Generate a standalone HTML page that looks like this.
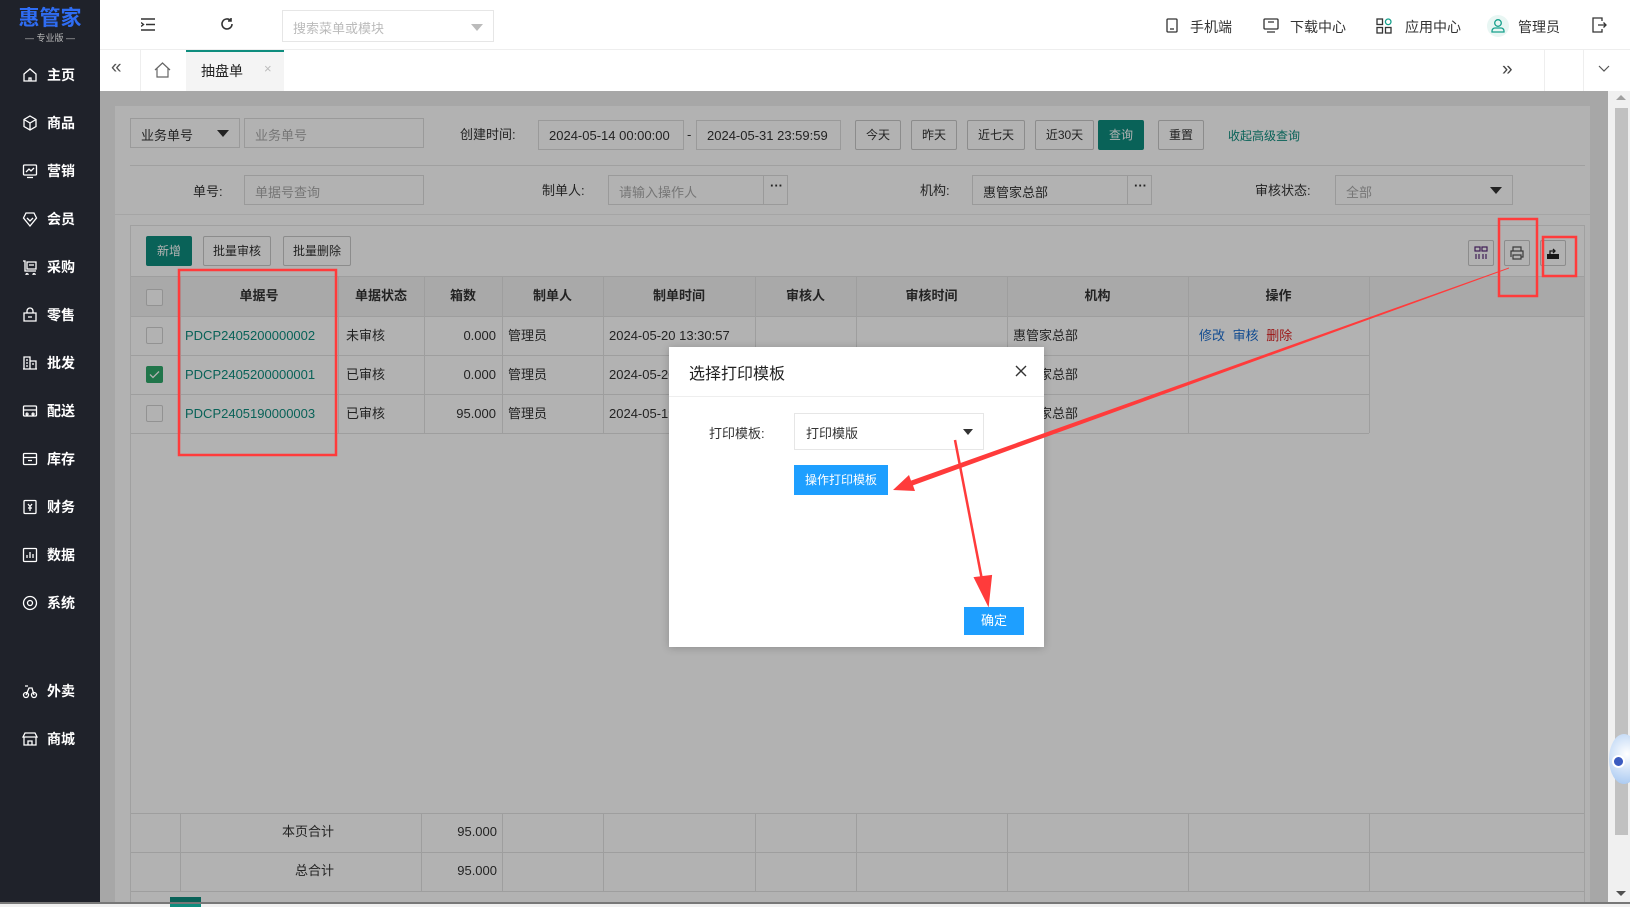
<!DOCTYPE html>
<html><head><meta charset="utf-8"><style>
*{box-sizing:border-box;margin:0;padding:0}
body{width:1630px;height:904px;position:relative;overflow:hidden;background:#f0f0f0;font-family:"Liberation Sans","Noto Sans CJK SC",sans-serif;font-size:13px;color:#333}
.abs{position:absolute}
#side{left:0;top:0;width:100px;height:904px;background:#1f222a}
.logo{left:0;top:0;width:100px;height:50px;text-align:center;color:#2f6df3;font-weight:bold;font-size:21px;line-height:26px;padding-top:6px}
.logo small{display:block;font-size:9px;color:#bbb;line-height:12px;font-weight:normal}
.mi{left:22px;color:#fff;font-size:14px;font-weight:bold;height:20px;line-height:20px}
.mi svg{position:absolute;left:0;top:2px}
.mi span{position:absolute;left:25px;white-space:nowrap}
#top{left:100px;top:0;width:1530px;height:50px;background:#fff;border-bottom:1px solid #eee}
#tabs{left:100px;top:50px;width:1530px;height:41px;background:#fff}
.box{position:absolute;border:1px solid #ddd;background:#fff}
.btn{position:absolute;border:1px solid #c9c9c9;background:#fff;text-align:center;font-size:12px;color:#333;border-radius:2px}
.teal{background:#0e8d7e;border-color:#0e8d7e;color:#fff}
.lbl{position:absolute;font-size:13px;color:#333;white-space:nowrap}
.ph{color:#aaa}
.cell{position:absolute;font-size:13px;white-space:nowrap;height:20px;line-height:20px}
.vl{position:absolute;width:1px;background:#e2e2e2}
.hl{position:absolute;height:1px;background:#e2e2e2}
.cb{position:absolute;width:17px;height:17px;border:1px solid #d2d2d2;background:#fff;border-radius:2px}
</style></head><body>

<div id="side" class="abs">
 <div class="logo abs">惠管家<small>— 专业版 —</small></div>
 <div class="mi abs" style="top:65px"><svg width="16" height="16" viewBox="0 0 16 16" fill="none" stroke="#fff" stroke-width="1.3"><path d="M2 7L8 2l6 5v7H2z M7 14v-3h2v3"/></svg><span>主页</span></div>
 <div class="mi abs" style="top:113px"><svg width="16" height="16" viewBox="0 0 16 16" fill="none" stroke="#fff" stroke-width="1.3"><path d="M8 1l6 3.5v7L8 15l-6-3.5v-7z M2 4.5L8 8l6-3.5 M8 8v7"/></svg><span>商品</span></div>
 <div class="mi abs" style="top:161px"><svg width="16" height="16" viewBox="0 0 16 16" fill="none" stroke="#fff" stroke-width="1.3"><rect x="1.5" y="2" width="13" height="10" rx="1"/><path d="M4 9l3-3 2 2 3-3 M5 14.5h6"/></svg><span>营销</span></div>
 <div class="mi abs" style="top:209px"><svg width="16" height="16" viewBox="0 0 16 16" fill="none" stroke="#fff" stroke-width="1.3"><path d="M8 15L1.5 7 4 2h8l2.5 5z M5 7l3 3 3-3"/></svg><span>会员</span></div>
 <div class="mi abs" style="top:257px"><svg width="16" height="16" viewBox="0 0 16 16" fill="none" stroke="#fff" stroke-width="1.3"><path d="M1 2h2v10h11 M5 3h9v7H5z M7 6h5 M5 14.5a1 1 0 1 0 .1 0 M12 14.5a1 1 0 1 0 .1 0"/></svg><span>采购</span></div>
 <div class="mi abs" style="top:305px"><svg width="16" height="16" viewBox="0 0 16 16" fill="none" stroke="#fff" stroke-width="1.3"><path d="M2 6h12v8H2z M5 6V4a3 3 0 0 1 6 0v2 M6 10h4"/></svg><span>零售</span></div>
 <div class="mi abs" style="top:353px"><svg width="16" height="16" viewBox="0 0 16 16" fill="none" stroke="#fff" stroke-width="1.3"><path d="M2 14V2h6v12 M8 6h6v8 M1 14h14 M4 5h2 M4 8h2 M4 11h2 M10 9h2"/></svg><span>批发</span></div>
 <div class="mi abs" style="top:401px"><svg width="16" height="16" viewBox="0 0 16 16" fill="none" stroke="#fff" stroke-width="1.3"><rect x="1.5" y="3" width="13" height="10" rx="1"/><path d="M1.5 7h13 M5 10a1 1 0 1 0 .1 0 M11 10a1 1 0 1 0 .1 0"/></svg><span>配送</span></div>
 <div class="mi abs" style="top:449px"><svg width="16" height="16" viewBox="0 0 16 16" fill="none" stroke="#fff" stroke-width="1.3"><rect x="1.5" y="2.5" width="13" height="11" rx="1"/><path d="M1.5 6.5h13 M6 9.5h4"/></svg><span>库存</span></div>
 <div class="mi abs" style="top:497px"><svg width="16" height="16" viewBox="0 0 16 16" fill="none" stroke="#fff" stroke-width="1.3"><rect x="2" y="1.5" width="12" height="13" rx="1"/><path d="M6 5l2 2.5L10 5 M8 7.5V12 M6 9h4"/></svg><span>财务</span></div>
 <div class="mi abs" style="top:545px"><svg width="16" height="16" viewBox="0 0 16 16" fill="none" stroke="#fff" stroke-width="1.3"><rect x="1.5" y="1.5" width="13" height="13" rx="1"/><path d="M5 11V8 M8 11V5 M11 11V7"/></svg><span>数据</span></div>
 <div class="mi abs" style="top:593px"><svg width="16" height="16" viewBox="0 0 16 16" fill="none" stroke="#fff" stroke-width="1.3"><circle cx="8" cy="8" r="6.5"/><circle cx="8" cy="8" r="2.5"/></svg><span>系统</span></div>
 <div class="mi abs" style="top:681px"><svg width="16" height="16" viewBox="0 0 16 16" fill="none" stroke="#fff" stroke-width="1.3"><circle cx="4" cy="12" r="2.5"/><circle cx="12" cy="12" r="2.5"/><path d="M4 12l3-7h3l2 7 M3 3h3"/></svg><span>外卖</span></div>
 <div class="mi abs" style="top:729px"><svg width="16" height="16" viewBox="0 0 16 16" fill="none" stroke="#fff" stroke-width="1.3"><path d="M2 6V14h12V6 M1 6l2-4h10l2 4z M6 14v-4h4v4"/></svg><span>商城</span></div>
</div>

<div id="top" class="abs">
 <svg class="abs" style="left:41px;top:18px" width="14" height="13" viewBox="0 0 14 13" fill="none" stroke="#333" stroke-width="1.4"><path d="M0 1h14 M5 6.5h9 M0 12h14 M0 4.5l2.5 2-2.5 2"/></svg>
 <svg class="abs" style="left:120px;top:17px" width="14" height="14" viewBox="0 0 14 14" fill="none" stroke="#333" stroke-width="1.6"><path d="M12 7a5 5 0 1 1-1.5-3.6 M11 1v3h-3"/></svg>
 <div class="box" style="left:182px;top:10px;width:212px;height:32px;border-color:#e6e6e6"><span class="ph abs" style="left:10px;top:7px;font-size:13px;color:#bbb">搜索菜单或模块</span><span class="abs" style="right:10px;top:13px;border:6px solid transparent;border-top:7px solid #bbb;border-bottom:0"></span></div>
 <svg class="abs" style="left:1066px;top:18px" width="12" height="15" viewBox="0 0 12 15" fill="none" stroke="#333" stroke-width="1.3"><rect x="1" y="1" width="10" height="13" rx="1"/><path d="M4 11h4"/></svg>
 <span class="lbl" style="left:1090px;top:17px;font-size:14px">手机端</span>
 <svg class="abs" style="left:1163px;top:18px" width="16" height="15" viewBox="0 0 16 15" fill="none" stroke="#333" stroke-width="1.3"><rect x="1" y="1" width="14" height="10" rx="1"/><path d="M4 14h8 M5 4h6"/></svg>
 <span class="lbl" style="left:1190px;top:17px;font-size:14px">下载中心</span>
 <svg class="abs" style="left:1276px;top:18px" width="16" height="16" viewBox="0 0 16 16" fill="none" stroke="#333" stroke-width="1.3"><rect x="1" y="1" width="5.5" height="5.5"/><rect x="1" y="9.5" width="5.5" height="5.5"/><rect x="9.5" y="9.5" width="5.5" height="5.5"/><circle cx="12.2" cy="3.8" r="2.8" stroke="#16a08c"/></svg>
 <span class="lbl" style="left:1305px;top:17px;font-size:14px">应用中心</span>
 <div class="abs" style="left:1387px;top:15px;width:22px;height:22px;border-radius:50%;background:#e8f6f3"></div>
 <svg class="abs" style="left:1391px;top:18px" width="14" height="15" viewBox="0 0 14 15" fill="none" stroke="#16a08c" stroke-width="1.3"><circle cx="7" cy="5" r="3.3"/><path d="M1 14h12v-1a3 3 0 0 0-3-3H4a3 3 0 0 0-3 3z"/></svg>
 <span class="lbl" style="left:1418px;top:17px;font-size:14px">管理员</span>
 <svg class="abs" style="left:1492px;top:17px" width="15" height="16" viewBox="0 0 15 16" fill="none" stroke="#333" stroke-width="1.3"><path d="M10 4V1H1v14h9v-3 M6 8h8 M11.5 5.5L14 8l-2.5 2.5"/></svg>
</div>

<div id="tabs" class="abs">
 <div class="abs" style="left:40px;top:0;width:1px;height:41px;background:#eee"></div>
 <span class="abs" style="left:11px;top:7px;font-size:19px;color:#555">«</span>
 <svg class="abs" style="left:54px;top:12px" width="17" height="16" viewBox="0 0 17 16" fill="none" stroke="#666" stroke-width="1.2"><path d="M1 8L8.5 1 16 8 M3 6.5V15h11V6.5"/></svg>
 <div class="abs" style="left:86px;top:0;width:98px;height:41px;background:#f4f4f4;border-top:2px solid #0e8d7e"></div>
 <span class="lbl" style="left:101px;top:11px;font-size:14px;color:#222">抽盘单</span>
 <span class="lbl" style="left:164px;top:11px;font-size:13px;color:#bbb">×</span>
 <div class="abs" style="left:1444px;top:0;width:1px;height:41px;background:#eee"></div>
 <div class="abs" style="left:1483px;top:0;width:1px;height:41px;background:#eee"></div>
 <span class="abs" style="left:1402px;top:9px;font-size:19px;color:#444">»</span>
 <svg class="abs" style="left:1498px;top:15px" width="12" height="8" viewBox="0 0 12 8" fill="none" stroke="#555" stroke-width="1.2"><path d="M1 1l5 5 5-5"/></svg>
</div>

<!-- content -->
<div class="abs" style="left:100px;top:91px;width:1508px;height:813px;background:#f0f0f0"></div>
<div class="abs" style="left:115px;top:106px;width:1475px;height:798px;background:#fff"></div>
<!-- filter row 1 -->
<div class="box" style="left:130px;top:118px;width:110px;height:30px"><span class="abs" style="left:10px;top:6px;font-size:13px">业务单号</span><span class="abs" style="right:10px;top:11px;border:6px solid transparent;border-top:7px solid #333;border-bottom:0"></span></div>
<div class="box" style="left:244px;top:118px;width:180px;height:30px"><span class="ph abs" style="left:10px;top:6px">业务单号</span></div>
<span class="lbl" style="left:460px;top:124px">创建时间:</span>
<div class="box" style="left:538px;top:120px;width:146px;height:30px"><span class="abs" style="left:10px;top:7px;font-size:13px">2024-05-14 00:00:00</span></div>
<span class="lbl" style="left:687px;top:127px">-</span>
<div class="box" style="left:696px;top:120px;width:145px;height:30px"><span class="abs" style="left:10px;top:7px;font-size:13px">2024-05-31 23:59:59</span></div>
<div class="btn" style="left:855px;top:120px;width:46px;height:30px;line-height:28px">今天</div>
<div class="btn" style="left:911px;top:120px;width:46px;height:30px;line-height:28px">昨天</div>
<div class="btn" style="left:967px;top:120px;width:58px;height:30px;line-height:28px">近七天</div>
<div class="btn" style="left:1035px;top:120px;width:59px;height:30px;line-height:28px">近30天</div>
<div class="btn teal" style="left:1098px;top:120px;width:46px;height:30px;line-height:28px">查询</div>
<div class="btn" style="left:1158px;top:120px;width:46px;height:30px;line-height:28px">重置</div>
<span class="lbl" style="left:1228px;top:127px;color:#0e8d7e;font-size:12px">收起高级查询</span>
<div class="abs" style="left:130px;top:165px;width:1455px;height:1px;background:#e6e6e6"></div>
<!-- filter row 2 -->
<span class="lbl" style="left:193px;top:181px">单号:</span>
<div class="box" style="left:244px;top:175px;width:180px;height:30px"><span class="ph abs" style="left:10px;top:6px">单据号查询</span></div>
<span class="lbl" style="left:542px;top:180px">制单人:</span>
<div class="box" style="left:608px;top:175px;width:180px;height:30px"><span class="ph abs" style="left:10px;top:6px">请输入操作人</span><div class="abs" style="left:154px;top:0;width:1px;height:28px;background:#ddd"></div><span class="abs" style="left:161px;top:2px;font-weight:bold">···</span></div>
<span class="lbl" style="left:920px;top:180px">机构:</span>
<div class="box" style="left:972px;top:175px;width:180px;height:30px"><span class="abs" style="left:10px;top:6px">惠管家总部</span><div class="abs" style="left:154px;top:0;width:1px;height:28px;background:#ddd"></div><span class="abs" style="left:161px;top:2px;font-weight:bold">···</span></div>
<span class="lbl" style="left:1255px;top:180px">审核状态:</span>
<div class="box" style="left:1335px;top:175px;width:178px;height:30px"><span class="ph abs" style="left:10px;top:6px">全部</span><span class="abs" style="right:10px;top:11px;border:6px solid transparent;border-top:7px solid #333;border-bottom:0"></span></div>
<div class="abs" style="left:115px;top:214px;width:1475px;height:1px;background:#ececec"></div>
<!-- table panel -->
<div class="abs" style="left:130px;top:225px;width:1455px;height:679px;border:1px solid #e6e6e6;background:#fff"></div>
<div class="btn teal" style="left:146px;top:236px;width:46px;height:30px;line-height:28px">新增</div>
<div class="btn" style="left:203px;top:236px;width:68px;height:30px;line-height:28px">批量审核</div>
<div class="btn" style="left:283px;top:236px;width:68px;height:30px;line-height:28px">批量删除</div>
<div class="btn" style="left:1468px;top:240px;width:26px;height:26px"><svg style="margin-top:5px" width="14" height="14" viewBox="0 0 14 14" fill="none" stroke="#5b2a7a" stroke-width="1.2"><rect x="1" y="1" width="5" height="4"/><rect x="8" y="1" width="5" height="4"/><path d="M2 8v5 M5 8v5 M9 8v5 M12 8v5"/></svg></div>
<div class="btn" style="left:1504px;top:240px;width:26px;height:26px"><svg style="margin-top:5px" width="14" height="14" viewBox="0 0 14 14" fill="none" stroke="#555" stroke-width="1.2"><path d="M3 5V1h8v4 M1 11V5h12v6h-2 M3 11v-2h8v4H3z"/></svg></div>
<div class="btn" style="left:1540px;top:240px;width:26px;height:26px"><svg style="margin-top:5px" width="14" height="14" viewBox="0 0 14 14"><path d="M1 8h12v5H1z" fill="#222"/><path d="M4 8V5h5 M7 3l2 2-2 2" fill="none" stroke="#222" stroke-width="1.3"/></svg></div>
<!-- table grid -->
<div class="abs" style="left:131px;top:276px;width:1453px;height:40px;background:#f2f2f2"></div>
<div class="hl" style="left:131px;top:276px;width:1453px"></div>
<div class="hl" style="left:131px;top:316px;width:1453px"></div>
<div class="hl" style="left:131px;top:355px;width:1238px"></div>
<div class="hl" style="left:131px;top:394px;width:1238px"></div>
<div class="hl" style="left:131px;top:433px;width:1238px"></div>
<div class="vl" style="left:180px;top:276px;height:157px"></div>
<div class="vl" style="left:338px;top:276px;height:157px"></div>
<div class="vl" style="left:424px;top:276px;height:157px"></div>
<div class="vl" style="left:502px;top:276px;height:157px"></div>
<div class="vl" style="left:603px;top:276px;height:157px"></div>
<div class="vl" style="left:755px;top:276px;height:157px"></div>
<div class="vl" style="left:856px;top:276px;height:157px"></div>
<div class="vl" style="left:1007px;top:276px;height:157px"></div>
<div class="vl" style="left:1188px;top:276px;height:157px"></div>
<div class="vl" style="left:1369px;top:276px;height:157px"></div>
<div class="cb" style="left:146px;top:289px"></div>
<div class="cell" style="left:180px;width:158px;top:286px;text-align:center;font-weight:bold">单据号</div>
<div class="cell" style="left:338px;width:86px;top:286px;text-align:center;font-weight:bold">单据状态</div>
<div class="cell" style="left:424px;width:78px;top:286px;text-align:center;font-weight:bold">箱数</div>
<div class="cell" style="left:502px;width:101px;top:286px;text-align:center;font-weight:bold">制单人</div>
<div class="cell" style="left:603px;width:152px;top:286px;text-align:center;font-weight:bold">制单时间</div>
<div class="cell" style="left:755px;width:101px;top:286px;text-align:center;font-weight:bold">审核人</div>
<div class="cell" style="left:856px;width:151px;top:286px;text-align:center;font-weight:bold">审核时间</div>
<div class="cell" style="left:1007px;width:181px;top:286px;text-align:center;font-weight:bold">机构</div>
<div class="cell" style="left:1188px;width:181px;top:286px;text-align:center;font-weight:bold">操作</div>

<div class="cb" style="left:146px;top:327px"></div>
<div class="cell" style="left:185px;top:326px;color:#0e8d7e">PDCP2405200000002</div>
<div class="cell" style="left:346px;top:326px">未审核</div>
<div class="cell" style="left:424px;width:72px;top:326px;text-align:right">0.000</div>
<div class="cell" style="left:508px;top:326px">管理员</div>
<div class="cell" style="left:609px;top:326px">2024-05-20 13:30:57</div>
<div class="cell" style="left:1013px;top:326px">惠管家总部</div>
<div class="cell" style="left:1199px;top:326px;color:#1e6fd0">修改 <span style="margin-left:4px">审核</span> <span style="color:#e02020;margin-left:4px">删除</span></div>

<div class="cb" style="left:146px;top:366px;background:#2fa86a;border-color:#2fa86a"><svg width="15" height="15" viewBox="0 0 15 15" fill="none" stroke="#fff" stroke-width="1.3"><path d="M3 7.5l3 3 6-6"/></svg></div>
<div class="cell" style="left:185px;top:365px;color:#0e8d7e">PDCP2405200000001</div>
<div class="cell" style="left:346px;top:365px">已审核</div>
<div class="cell" style="left:424px;width:72px;top:365px;text-align:right">0.000</div>
<div class="cell" style="left:508px;top:365px">管理员</div>
<div class="cell" style="left:609px;top:365px">2024-05-20 13:30:57</div>
<div class="cell" style="left:1013px;top:365px">惠管家总部</div>

<div class="cb" style="left:146px;top:405px"></div>
<div class="cell" style="left:185px;top:404px;color:#0e8d7e">PDCP2405190000003</div>
<div class="cell" style="left:346px;top:404px">已审核</div>
<div class="cell" style="left:424px;width:72px;top:404px;text-align:right">95.000</div>
<div class="cell" style="left:508px;top:404px">管理员</div>
<div class="cell" style="left:609px;top:404px">2024-05-19 10:20:11</div>
<div class="cell" style="left:1013px;top:404px">惠管家总部</div>

<!-- summary -->
<div class="hl" style="left:131px;top:813px;width:1453px"></div>
<div class="hl" style="left:131px;top:852px;width:1453px"></div>
<div class="hl" style="left:131px;top:891px;width:1453px"></div>
<div class="vl" style="left:180px;top:813px;height:78px"></div>
<div class="vl" style="left:421px;top:813px;height:78px"></div>
<div class="vl" style="left:502px;top:813px;height:78px"></div>
<div class="vl" style="left:603px;top:813px;height:78px"></div>
<div class="vl" style="left:755px;top:813px;height:78px"></div>
<div class="vl" style="left:856px;top:813px;height:78px"></div>
<div class="vl" style="left:1007px;top:813px;height:78px"></div>
<div class="vl" style="left:1188px;top:813px;height:78px"></div>
<div class="vl" style="left:1369px;top:813px;height:78px"></div>
<div class="cell" style="left:180px;width:154px;top:822px;text-align:right">本页合计</div>
<div class="cell" style="left:421px;width:76px;top:822px;text-align:right">95.000</div>
<div class="cell" style="left:180px;width:154px;top:861px;text-align:right">总合计</div>
<div class="cell" style="left:421px;width:76px;top:861px;text-align:right">95.000</div>
<div class="abs" style="left:170px;top:897px;width:31px;height:10px;background:#0e8d7e"></div>

<!-- dim overlay -->
<div class="abs" style="left:100px;top:91px;width:1508px;height:813px;background:rgba(0,0,0,0.3)"></div>

<!-- scrollbar -->
<div class="abs" style="left:1613px;top:91px;width:17px;height:813px;background:#f0f0f0"></div>
<div class="abs" style="left:1615px;top:108px;width:13px;height:727px;background:#c1c1c1"></div>
<span class="abs" style="left:1616px;top:95px;border:5px solid transparent;border-bottom:5px solid #a0a0a0;border-top:0"></span>
<span class="abs" style="left:1616px;top:891px;border:5px solid transparent;border-top:5px solid #505050;border-bottom:0"></span>
<div class="abs" style="left:1609px;top:734px;width:30px;height:50px;border-radius:50%;background:radial-gradient(circle at 60% 40%,#fff,#9fc3f0)"></div>
<div class="abs" style="left:1612px;top:755px;width:13px;height:13px;border-radius:50%;background:#3b5bc0;border:2px solid #fff"></div>
<div class="abs" style="left:0;top:902px;width:1630px;height:2px;background:#777"></div>

<!-- dialog -->
<div class="abs" style="left:669px;top:347px;width:375px;height:300px;background:#fff;box-shadow:0 1px 8px rgba(0,0,0,.2)">
 <div class="abs" style="left:20px;top:13px;font-size:16px;color:#222">选择打印模板</div>
 <svg class="abs" style="left:346px;top:18px" width="12" height="12" viewBox="0 0 12 12" stroke="#333" stroke-width="1.4"><path d="M1 1l10 10 M11 1L1 11"/></svg>
 <div class="abs" style="left:0;top:49px;width:375px;height:1px;background:#eee"></div>
 <div class="abs" style="left:40px;top:76px;font-size:13px">打印模板:</div>
 <div class="abs" style="left:125px;top:66px;width:190px;height:37px;border:1px solid #e6e6e6"><span class="abs" style="left:11px;top:9px;font-size:13px">打印模版</span><span class="abs" style="right:10px;top:15px;border:5px solid transparent;border-top:6px solid #333;border-bottom:0"></span></div>
 <div class="abs" style="left:125px;top:118px;width:94px;height:30px;background:#1e9fff;color:#fff;font-size:12px;text-align:center;line-height:30px">操作打印模板</div>
 <div class="abs" style="left:295px;top:260px;width:60px;height:28px;background:#1e9fff;color:#fff;font-size:13px;text-align:center;line-height:28px">确定</div>
</div>

<!-- annotations -->
<svg class="abs" style="left:0;top:0" width="1630" height="904" viewBox="0 0 1630 904" fill="none">
 <rect x="179" y="270" width="157" height="185" stroke="#ff3b3b" stroke-width="2.5"/>
 <rect x="1499" y="219" width="38" height="77" stroke="#ff3b3b" stroke-width="2.5"/>
 <rect x="1543" y="237" width="33" height="39" stroke="#ff3b3b" stroke-width="2.5"/>
 <path d="M1509 267.5 L911 480.6 L909 475 L893 490 L915 491 L913 485.4 L1509 268.5 Z" fill="#ff3b3b"/>
 <path d="M955 440 L983 585" stroke="#ff3b3b" stroke-width="2.5"/>
 <path d="M988 604 L975 578 L991 576 Z" fill="#ff3b3b" stroke="#ff3b3b" stroke-width="2"/>
</svg>
</body></html>
